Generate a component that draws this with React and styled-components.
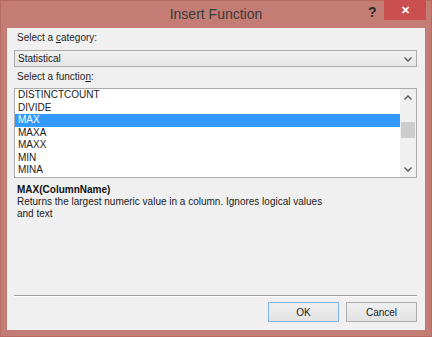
import React from "react";
import styled, { createGlobalStyle } from "styled-components";

const GlobalStyle = createGlobalStyle`
  body {
    margin: 0;
    background: #c47d74;
  }
`;

const functions = ["DISTINCTCOUNT", "DIVIDE", "MAX", "MAXA", "MAXX", "MIN", "MINA"];

function Chevron({ up }) {
  return (
    <svg width="8" height="5" viewBox="0 0 8 5">
      <polyline
        points={up ? "0.5,4.5 4,1 7.5,4.5" : "0.5,0.5 4,4 7.5,0.5"}
        fill="none"
        stroke="#555"
        strokeWidth="1.3"
      />
    </svg>
  );
}

export default function App() {
  return (
    <>
      <GlobalStyle />
      <Window>
        <TitleBar>
          <Title>Insert Function</Title>
          <Help>?</Help>
          <Close>✕</Close>
        </TitleBar>
        <Client>
          <Label>
            Select a <u>c</u>ategory:
          </Label>
          <Select>
            <span>Statistical</span>
            <Chevron />
          </Select>
          <Label $top={4}>
            Select a functio<u>n</u>:
          </Label>
          <ListBox>
            <Items>
              {functions.map((f) => (
                <Item key={f} $selected={f === "MAX"}>
                  {f}
                </Item>
              ))}
            </Items>
            <ScrollBar>
              <Chevron up />
              <Track>
                <Thumb />
              </Track>
              <Chevron />
            </ScrollBar>
          </ListBox>
          <Description>
            <strong>MAX(ColumnName)</strong>
            <br />
            Returns the largest numeric value in a column. Ignores logical values
            <br />
            and text
          </Description>
          <Separator />
          <Buttons>
            <Button $default>OK</Button>
            <Button>Cancel</Button>
          </Buttons>
        </Client>
      </Window>
    </>
  );
}

const Window = styled.div`
  width: 432px;
  height: 337px;
  box-sizing: border-box;
  background: #c47d74;
  border: 1px solid #b76a62;
  display: flex;
  flex-direction: column;
  font-family: "Liberation Sans", Arial, sans-serif;
  font-size: 10px;
  color: #1a1a1a;
`;

const TitleBar = styled.div`
  height: 27px;
  position: relative;
  display: flex;
  justify-content: center;
  align-items: center;
`;

const Title = styled.div`
  font-size: 14px;
  color: #3a3a3a;
  margin-top: -1px;
`;

const Help = styled.div`
  position: absolute;
  left: 367px;
  top: 3px;
  font-size: 14px;
  font-weight: bold;
  color: #2a2a2a;
`;

const Close = styled.div`
  position: absolute;
  left: 383px;
  top: -1px;
  width: 42px;
  height: 20px;
  background: #c94f50;
  color: #fff;
  font-size: 11px;
  font-weight: bold;
  display: flex;
  align-items: center;
  justify-content: center;
`;

const Client = styled.div`
  flex: 1;
  margin: 0 6px 6px 6px;
  background: #f0f0f0;
  border: 1px solid #d9a9a3;
  border-width: 0;
  padding: 4px 8px 8px 7px;
  display: flex;
  flex-direction: column;
`;

const Label = styled.div`
  line-height: 12px;
  height: 12px;
  margin-top: ${(p) => p.$top || 0}px;
  padding-left: 3px;
  color: #1e1e1e;
`;

const Select = styled.div`
  margin-top: 6px;
  height: 17px;
  box-sizing: border-box;
  border: 1px solid #acacac;
  background: linear-gradient(#f1f1f1, #e6e6e6);
  display: flex;
  align-items: center;
  justify-content: space-between;
  padding: 0 4px 0 3px;
  svg {
    margin-top: 1px;
  }
`;

const ListBox = styled.div`
  margin-top: 5px;
  height: 90px;
  box-sizing: border-box;
  border: 1px solid #acacac;
  background: #fff;
  display: flex;
`;

const Items = styled.div`
  flex: 1;
`;

const Item = styled.div`
  height: 12.5px;
  line-height: 12.5px;
  padding-left: 3px;
  background: ${(p) => (p.$selected ? "#3399ff" : "transparent")};
  color: ${(p) => (p.$selected ? "#fff" : "#1a1a1a")};
`;

const ScrollBar = styled.div`
  width: 16px;
  background: #f0f0f0;
  display: flex;
  flex-direction: column;
  align-items: center;
  padding: 6px 0 5px;
  box-sizing: border-box;
`;

const Track = styled.div`
  flex: 1;
  align-self: stretch;
  padding: 0 1px;
`;

const Thumb = styled.div`
  margin-top: 22px;
  height: 16px;
  background: #cdcdcd;
`;

const Description = styled.div`
  margin-top: 6px;
  line-height: 12px;
  padding-left: 3px;
  strong {
    font-weight: bold;
    color: #111;
  }
`;

const Separator = styled.div`
  margin-top: auto;
  height: 1px;
  background: #a0a0a0;
  border-bottom: 1px solid #fff;
`;

const Buttons = styled.div`
  margin-top: 5px;
  display: flex;
  justify-content: flex-end;
  gap: 7px;
`;

const Button = styled.button`
  width: 71px;
  height: 20px;
  box-sizing: border-box;
  border: 1px solid ${(p) => (p.$default ? "#7eb4ea" : "#adadad")};
  background: linear-gradient(#efefef, #e3e3e3);
  font-family: "Liberation Sans", Arial, sans-serif;
  font-size: 10px;
  color: #1a1a1a;
  padding: 0;
`;
